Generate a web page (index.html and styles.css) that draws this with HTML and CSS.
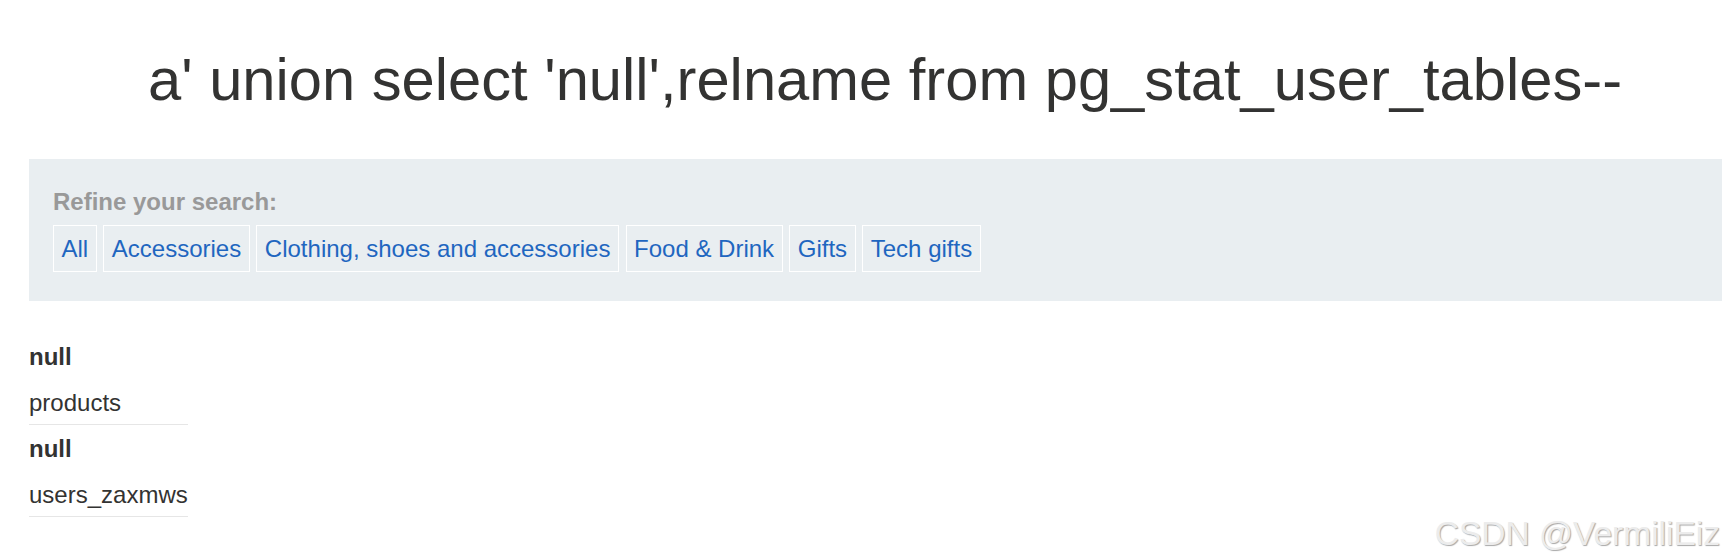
FILE: index.html
```html
<!DOCTYPE html>
<html>
<head>
<meta charset="utf-8">
<link rel="stylesheet" href="styles.css">
</head>
<body>
<div class="page">
  <h1 class="title">a' union select 'null',relname from pg_stat_user_tables--</h1>
  <section class="filter">
    <div class="filter-label">Refine your search:</div>
    <div class="filter-list">
      <a class="filter-item" href="#">All</a>
      <a class="filter-item" href="#">Accessories</a>
      <a class="filter-item" href="#">Clothing, shoes and accessories</a>
      <a class="filter-item" href="#">Food &amp; Drink</a>
      <a class="filter-item" href="#">Gifts</a>
      <a class="filter-item" href="#">Tech gifts</a>
    </div>
  </section>
  <div class="results">
    <div class="row">
      <div class="row-name">null</div>
      <div class="row-desc">products</div>
    </div>
    <div class="row">
      <div class="row-name">null</div>
      <div class="row-desc">users_zaxmws</div>
    </div>
  </div>
</div>
<div class="watermark">CSDN @VermiliEiz</div>
</body>
</html>
```
FILE: styles.css
```css
html, body {
  margin: 0;
  padding: 0;
  overflow: hidden;
  background: #ffffff;
}
body {
  font-family: "Liberation Sans", Arial, sans-serif;
  font-size: 24px;
  color: #333332;
  width: 1722px;
  height: 554px;
  position: relative;
}
.page {
  margin-left: 29px;
  width: 1707px;
}
.title {
  margin: 0;
  padding: 44px 0 0 5px;
  font-size: 59.7px;
  font-weight: normal;
  line-height: 72px;
  text-align: center;
  color: #333332;
}
.filter {
  margin-top: 43px;
  background: #e9eef1;
  padding: 28px 24px 29px;
}
.filter-label {
  font-weight: bold;
  color: #999999;
  line-height: 29px;
}
.filter-list {
  display: flex;
  gap: 6.67px;
  margin-top: 9px;
}
.filter-item {
  display: block;
  border: 1px solid #ffffff;
  padding: 8px 7.5px;
  line-height: 29px;
  color: #1f66c0;
  text-decoration: none;
  white-space: nowrap;
}
.results {
  margin-top: 32px;
  width: max-content;
}
.row {
  padding: 9px 0 7px;
  border-bottom: 1px solid #e6e6e6;
  line-height: 29px;
}
.row-name {
  font-weight: bold;
}
.row-desc {
  margin-top: 17px;
}
.watermark {
  position: absolute;
  right: 2px;
  top: 517px;
  font-size: 33.5px;
  line-height: 33.5px;
  color: #ececec;
  text-shadow: 1px 1px 1px #a8a8a8;
  white-space: nowrap;
}
```
